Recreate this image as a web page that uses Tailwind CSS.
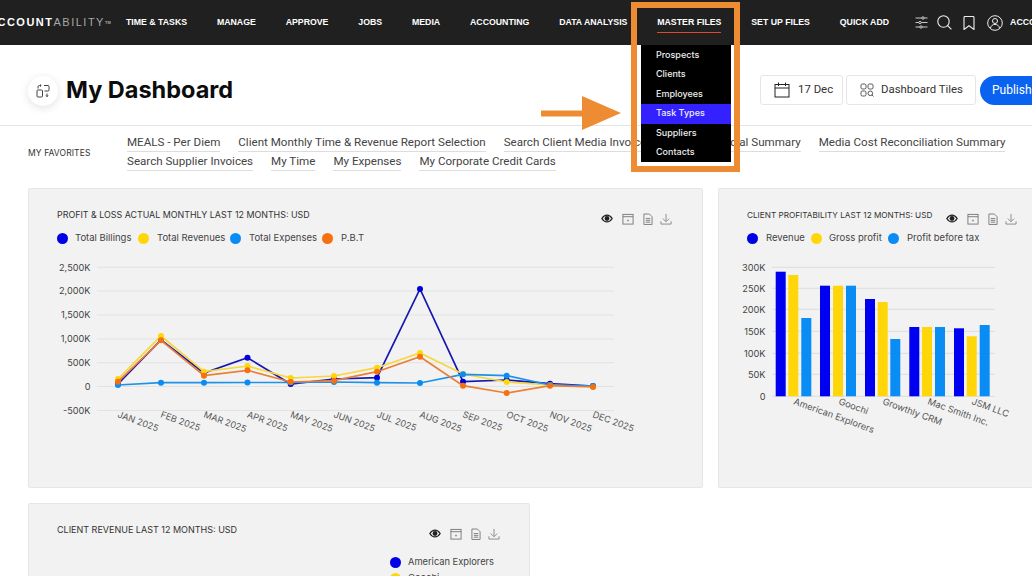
<!DOCTYPE html>
<html lang="en">
  <head>
    <meta charset="UTF-8" />
    <meta name="viewport" content="width=device-width, initial-scale=1.0" />
    <title>My Dashboard</title>
    <script src="https://cdn.jsdelivr.net/npm/@tailwindcss/browser@4"></script>
  </head>
  <body class="bg-white font-['Inter',sans-serif] text-[#222] overflow-hidden">
    <!-- shared icons -->
    <svg class="hidden">
      <symbol id="i-eye" viewBox="0 0 14 10">
        <path d="M1 5c1.600-2.600 3.600-4 6-4s4.400 1.400 6 4c-1.600 2.600-3.600 4-6 4S2.600 7.600 1 5z" fill="none" stroke="#222" stroke-width="1.500" />
        <circle cx="7" cy="5" r="2.800" fill="#222" />
      </symbol>
      <symbol id="i-cal" viewBox="0 0 13 13">
        <rect x="1" y="1.500" width="11" height="10.500" fill="none" stroke="#777" />
        <path d="M1 4h11" stroke="#777" />
        <path d="M5.500 8.500l1-1.200 1 1.200z" fill="none" stroke="#777" stroke-width="0.700" />
      </symbol>
      <symbol id="i-doc" viewBox="0 0 11 13">
        <path d="M1 1h6l3 3v8.500H1z M3 6h5 M3 8h5 M3 10h5" fill="none" stroke="#777" />
      </symbol>
      <symbol id="i-dl" viewBox="0 0 13 13">
        <path d="M6.500 1v8 M3 6l3.500 3.500L10 6 M1 9v3h11V9" fill="none" stroke="#888" />
      </symbol>
    </svg>

    <!-- Top nav -->
    <header class="h-[45px] bg-[#202020] flex items-center whitespace-nowrap overflow-hidden">
      <div class="w-[119px] shrink-0 -ml-[12px] text-[11px] font-bold tracking-[1.5px] font-['Liberation_Sans',sans-serif] text-white">
        ACCOUNT<span class="text-[#a8a8a8] font-normal">ABILITY</span><sup class="text-[4px] tracking-normal text-[#a8a8a8]">TM</sup>
      </div>
      <nav class="flex items-center gap-[29.850px] ml-[19px] text-[8.750px] font-bold font-['Liberation_Sans',sans-serif] text-white">
        <a>TIME &amp; TASKS</a>
        <a>MANAGE</a>
        <a>APPROVE</a>
        <a>JOBS</a>
        <a>MEDIA</a>
        <a>ACCOUNTING</a>
        <a>DATA ANALYSIS</a>
        <a class="relative">MASTER FILES<span class="absolute left-0 right-0 top-[16px] h-px bg-[#e0492f]"></span></a>
        <a>SET UP FILES</a>
        <a>QUICK ADD</a>
      </nav>
      <div class="flex items-center ml-[26px] text-white">
        <svg width="13" height="13" viewBox="0 0 13 13" fill="none" stroke="#ddd" stroke-width="0.900">
          <path d="M0.500 2h12 M0.500 6.500h12 M0.500 11h12" />
          <circle cx="8" cy="2" r="1.200" fill="#202020" />
          <circle cx="5" cy="6.500" r="1.200" fill="#202020" />
          <circle cx="6" cy="11" r="1.200" fill="#202020" />
        </svg>
        <svg class="ml-[9px]" width="15" height="15" viewBox="0 0 15 15" fill="none" stroke="#eee" stroke-width="1.100">
          <circle cx="6.500" cy="6.500" r="5.700" />
          <path d="M10.700 10.700l3.700 3.700" />
        </svg>
        <svg class="ml-[11px]" width="12" height="14" viewBox="0 0 12 14" fill="none" stroke="#eee" stroke-width="1.100">
          <path d="M1 1.500q0-1 1-1h8q1 0 1 1v12L6 9.800 1 13.500z" />
        </svg>
        <svg class="ml-[12px]" width="16" height="16" viewBox="0 0 16 16" fill="none" stroke="#eee" stroke-width="1">
          <circle cx="8" cy="8" r="7.300" />
          <circle cx="8" cy="6" r="2.500" />
          <path d="M3.500 13c.6-2.500 2.400-3.600 4.500-3.600s3.900 1.100 4.500 3.600" />
        </svg>
        <span class="ml-[7px] text-[8.750px] font-bold font-['Liberation_Sans',sans-serif]">ACCOUNT</span>
      </div>
    </header>

    <!-- Page title row -->
    <section class="h-[81px] pt-[10px] pl-[28px] flex items-center border-b border-[#e4e4e4] whitespace-nowrap">
      <div class="w-[30px] h-[30px] mt-[1px] rounded-full bg-white shadow-[0_2px_8px_rgba(0,0,0,0.12)] flex items-center justify-center">
        <svg width="14" height="14" viewBox="0 0 14 14" fill="none" stroke="#444" stroke-width="1">
          <path d="M2 4.500V3q0-1.500 1.500-1.500H5 M4 0.500l1.200 1-1.200 1 M8 1.500h4q1 0 1 1v3.500q0 1-1 1H8.500 M1.500 6h4q1 0 1 1v5q0 1-1 1h-3.500q-1 0-1-1V7q0-1 .5-1z" />
          <path d="M11 9.500v3l-1.300-1 M11 12.500l1.300-1" />
        </svg>
      </div>
      <h1 class="ml-[8px] text-[23.500px] font-bold text-[#0c0c0c]">My Dashboard</h1>
      <div class="ml-auto flex items-center gap-[3px] -mr-[30px] text-[11.400px] font-['Roboto',sans-serif] text-[#333]">
        <button class="h-[30px] w-[83px] border border-[#e6e6e6] rounded-[3px] flex items-center pl-[13px] gap-[8px]">
          <svg width="16" height="16" viewBox="0 0 16 16" fill="none" stroke="#222" stroke-width="1">
            <rect x="1" y="2.500" width="14" height="12.500" />
            <path d="M1 6h14 M4.500 0.500v3.500 M11.500 0.500v3.500" />
          </svg>
          17 Dec
        </button>
        <button class="h-[30px] w-[130px] border border-[#e6e6e6] rounded-[3px] flex items-center pl-[13px] gap-[7px]">
          <svg width="14" height="14" viewBox="0 0 14 14" fill="none" stroke="#555" stroke-width="1">
            <rect x="1" y="1" width="5" height="5" rx="1.500" />
            <rect x="8" y="1" width="5" height="5" rx="1.500" />
            <rect x="1" y="8" width="5" height="5" rx="1.500" />
            <circle cx="10.300" cy="10.300" r="2.300" />
            <path d="M12 12l1.500 1.500" />
          </svg>
          Dashboard Tiles
        </button>
        <button class="h-[29px] w-[82px] ml-[1px] bg-[#0a62f0] text-white text-[12px] rounded-l-full text-left pl-[12px]">Publish</button>
      </div>
    </section>

    <!-- Favorites -->
    <section class="flex items-center pl-[28px] h-[51px] whitespace-nowrap">
      <div class="w-[99px] shrink-0 mt-[3px] text-[8.500px] text-[#333] tracking-[0.1px]">MY FAVORITES</div>
      <div class="w-[900px] flex flex-wrap gap-x-[18px] text-[11.600px] font-['Roboto',sans-serif] text-[#444] leading-[18px]">
        <a class="border-b border-[#ddd]">MEALS - Per Diem</a>
        <a class="border-b border-[#ddd]">Client Monthly Time &amp; Revenue Report Selection</a>
        <a class="w-[160px] border-b border-[#ddd]">Search Client Media Invoices</a>
        <a class="w-[119px] text-right border-b border-[#ddd]">Financial Summary</a>
        <a class="border-b border-[#ddd]">Media Cost Reconciliation Summary</a>
        <a class="border-b border-[#ddd]">Search Supplier Invoices</a>
        <a class="border-b border-[#ddd]">My Time</a>
        <a class="border-b border-[#ddd]">My Expenses</a>
        <a class="border-b border-[#ddd]">My Corporate Credit Cards</a>
      </div>
    </section>

    <!-- Chart cards -->
    <main class="pl-[28px] pt-[11px] w-[1100px]">
      <div class="flex gap-[15px]">
        <div class="w-[675px] h-[300px] bg-[#f2f2f2] border border-[#e6e6e6] rounded-[2px] pt-[20px] pl-[28px] shrink-0">
          <div class="flex items-center h-[12px] pr-[30px]">
            <h3 class="text-[8.900px] text-[#333] whitespace-nowrap">PROFIT &amp; LOSS ACTUAL MONTHLY LAST 12 MONTHS: USD</h3>
            <div class="ml-auto flex items-center gap-[9px] mt-[7px]">
              <svg width="12" height="9"><use href="#i-eye" /></svg>
              <svg width="12" height="12"><use href="#i-cal" /></svg>
              <svg width="10" height="12"><use href="#i-doc" /></svg>
              <svg class="-ml-[2px]" width="12" height="12"><use href="#i-dl" /></svg>
            </div>
          </div>
          <div class="flex items-center mt-[11px] text-[9.500px] text-[#444] whitespace-nowrap h-[12px]">
            <span class="w-[11px] h-[11px] rounded-full bg-[#0000e6]"></span>
            <span class="ml-[7px] w-[63px]">Total Billings</span>
            <span class="w-[11px] h-[11px] rounded-full bg-[#ffd60a]"></span>
            <span class="ml-[8px] w-[73px]">Total Revenues</span>
            <span class="w-[11px] h-[11px] rounded-full bg-[#0a8cf5]"></span>
            <span class="ml-[8px] w-[73px]">Total Expenses</span>
            <span class="w-[11px] h-[11px] rounded-full bg-[#f5700f]"></span>
            <span class="ml-[8px]">P.B.T</span>
          </div>
          <svg id="lineChart" class="block -ml-[28px] mt-[11px]" width="673" height="190" viewBox="29 255 673 190" font-family="Inter, sans-serif"></svg>
        </div>

        <div class="w-[345px] h-[300px] bg-[#f2f2f2] border border-[#e6e6e6] rounded-[2px] pt-[20px] pl-[28px] shrink-0">
          <div class="flex items-center h-[12px]">
            <h3 class="w-[199px] text-[8.200px] text-[#333] whitespace-nowrap">CLIENT PROFITABILITY LAST 12 MONTHS: USD</h3>
            <div class="flex items-center gap-[9px] mt-[7px]">
              <svg width="12" height="9"><use href="#i-eye" /></svg>
              <svg width="12" height="12"><use href="#i-cal" /></svg>
              <svg width="10" height="12"><use href="#i-doc" /></svg>
              <svg class="-ml-[2px]" width="12" height="12"><use href="#i-dl" /></svg>
            </div>
          </div>
          <div class="flex items-center mt-[11px] text-[9.500px] text-[#444] whitespace-nowrap h-[12px]">
            <span class="w-[11px] h-[11px] rounded-full bg-[#0000e6]"></span>
            <span class="ml-[8px] w-[45px]">Revenue</span>
            <span class="w-[11px] h-[11px] rounded-full bg-[#ffd60a]"></span>
            <span class="ml-[7px] w-[59px]">Gross profit</span>
            <span class="w-[11px] h-[11px] rounded-full bg-[#0a8cf5]"></span>
            <span class="ml-[8px]">Profit before tax</span>
          </div>
          <svg id="barChart" class="block -ml-[28px] mt-[11px]" width="343" height="190" viewBox="719 255 343 190" font-family="Inter, sans-serif"></svg>
        </div>
      </div>

      <div class="w-[502px] h-[300px] mt-[15px] bg-[#f2f2f2] border border-[#e6e6e6] rounded-[2px] pt-[20px] pl-[28px]">
        <div class="flex items-center h-[12px] pr-[29px]">
          <h3 class="text-[9px] text-[#333] whitespace-nowrap">CLIENT REVENUE LAST 12 MONTHS: USD</h3>
          <div class="ml-auto flex items-center gap-[9px] mt-[7px]">
            <svg width="12" height="9"><use href="#i-eye" /></svg>
            <svg width="12" height="12"><use href="#i-cal" /></svg>
            <svg width="10" height="12"><use href="#i-doc" /></svg>
            <svg class="-ml-[2px]" width="12" height="12"><use href="#i-dl" /></svg>
          </div>
        </div>
        <div class="ml-[333px] mt-[18px] text-[9.300px] text-[#444] whitespace-nowrap">
          <div class="flex items-center h-[16px]">
            <span class="w-[11px] h-[11px] rounded-full bg-[#0000e6]"></span>
            <span class="ml-[7px]">American Explorers</span>
          </div>
          <div class="flex items-center h-[16px]">
            <span class="w-[11px] h-[11px] rounded-full bg-[#ffd60a]"></span>
            <span class="ml-[7px]">Goochi</span>
          </div>
        </div>
      </div>
    </main>

    <!-- Annotation and open menu, lying over the page -->
    <div class="absolute left-[641px] top-[45px] w-[90px] h-[117px] pt-[0.5px] bg-black text-[9px] font-medium text-[#eee]">
      <a class="flex items-center h-[19.500px] pb-[2px] pl-[15px]">Prospects</a>
      <a class="flex items-center h-[19.500px] pb-[2px] pl-[15px]">Clients</a>
      <a class="flex items-center h-[19.500px] pb-[2px] pl-[15px]">Employees</a>
      <a class="flex items-center h-[19.500px] pb-[2px] pl-[15px] bg-[#3322ff]">Task Types</a>
      <a class="flex items-center h-[19.500px] pb-[2px] pl-[15px]">Suppliers</a>
      <a class="flex items-center h-[19.500px] pb-[2px] pl-[15px]">Contacts</a>
    </div>
    <div class="absolute left-[631px] top-[2px] w-[109px] h-[170px] border-[6px] border-[#ee8c33]"></div>
    <svg class="absolute left-[541px] top-[96px]" width="81" height="35" viewBox="0 0 81 35">
      <path d="M0 14.500h41V0l39 17L41 34V20.500H0z" fill="#ee8c33" />
    </svg>

    <script>
      const NS = "http://www.w3.org/2000/svg";
      function add(svg, tag, attrs, text) {
        const el = document.createElementNS(NS, tag);
        for (const k in attrs) el.setAttribute(k, attrs[k]);
        if (text) el.textContent = text;
        svg.appendChild(el);
      }

      // Line chart, values are pixel positions taken from the plot
      const lineChart = document.getElementById("lineChart");
      const ticks = [["2,500K", 267.3], ["2,000K", 291], ["1,500K", 315], ["1,000K", 339], ["500K", 362.7], ["0", 386.5], ["-500K", 410.5]];
      ticks.forEach(([label, y]) => {
        add(lineChart, "line", { x1: 97, x2: 614, y1: y, y2: y, stroke: "#e2e2e2" });
        add(lineChart, "text", { x: 90.5, y: y + 3.3, "text-anchor": "end", "font-size": 9.2, fill: "#444" }, label);
      });
      const xs = [118, 161, 204, 247.5, 290.7, 334, 377, 420, 463, 506.7, 550, 593];
      const series = [
        ["#0000d8", "#1616b4", [384, 340, 373, 357.7, 384, 379, 377.7, 289, 381.7, 380, 383.7, 386]],
        ["#ffd60a", "#f5d83c", [379, 336, 371.7, 366, 378, 376, 367.7, 353, 374, 382, 385, 386.5]],
        ["#0a8cf5", "#1c92e8", [385, 382.7, 382.7, 382.5, 382.5, 382, 382.7, 383, 374.3, 375.7, 385, 386]],
        ["#f5700f", "#ea7f36", [381.7, 340.3, 375.7, 370.3, 382, 380.7, 371.7, 356.7, 385.7, 393, 385.7, 387]],
      ];
      series.forEach(([dot, line, ys]) => {
        add(lineChart, "polyline", { points: xs.map((x, i) => x + "," + ys[i]).join(" "), fill: "none", stroke: line, "stroke-width": 1.7 });
        ys.forEach((y, i) => add(lineChart, "circle", { cx: xs[i], cy: y, r: 3, fill: dot }));
      });
      ["JAN", "FEB", "MAR", "APR", "MAY", "JUN", "JUL", "AUG", "SEP", "OCT", "NOV", "DEC"].forEach((m, i) => {
        const x = xs[i] - 1, y = 417;
        add(lineChart, "text", { x, y, "font-size": 9, fill: "#555", transform: `rotate(20 ${x} ${y})` }, m + " 2025");
      });

      // Bar chart
      const barChart = document.getElementById("barChart");
      [["300K", 267.3], ["250K", 288.3], ["200K", 309.3], ["150K", 331.3], ["100K", 353.3], ["50K", 374.3], ["0", 396.3]].forEach(([label, y]) => {
        add(barChart, "line", { x1: 772, x2: 995, y1: y, y2: y, stroke: "#dcdcdc" });
        add(barChart, "text", { x: 765.5, y: y + 3.3, "text-anchor": "end", "font-size": 9.2, fill: "#444" }, label);
      });
      const bars = [
        [775.7, 271.7, "#0000f0"], [788.3, 275, "#ffd60a"], [801.3, 318, "#0a8cf5"],
        [820, 285.7, "#0000f0"], [833, 285.7, "#ffd60a"], [846, 285.7, "#0a8cf5"],
        [865, 299, "#0000f0"], [877.7, 302, "#ffd60a"], [890.3, 339, "#0a8cf5"],
        [909.3, 327, "#0000f0"], [922, 327, "#ffd60a"], [935, 327, "#0a8cf5"],
        [954, 328.3, "#0000f0"], [966.7, 336.3, "#ffd60a"], [979.7, 325, "#0a8cf5"],
      ];
      bars.forEach(([x, top, color]) => add(barChart, "rect", { x, y: top, width: 10, height: 396.3 - top, fill: color }));
      [["American Explorers", 793], ["Goochi", 838], ["Growthly CRM", 882], ["Mac Smith Inc.", 927], ["JSM LLC", 971]].forEach(([name, x]) => {
        add(barChart, "text", { x, y: 404, "font-size": 9.2, fill: "#555", transform: `rotate(20 ${x} 404)` }, name);
      });
    </script>
  </body>
</html>
